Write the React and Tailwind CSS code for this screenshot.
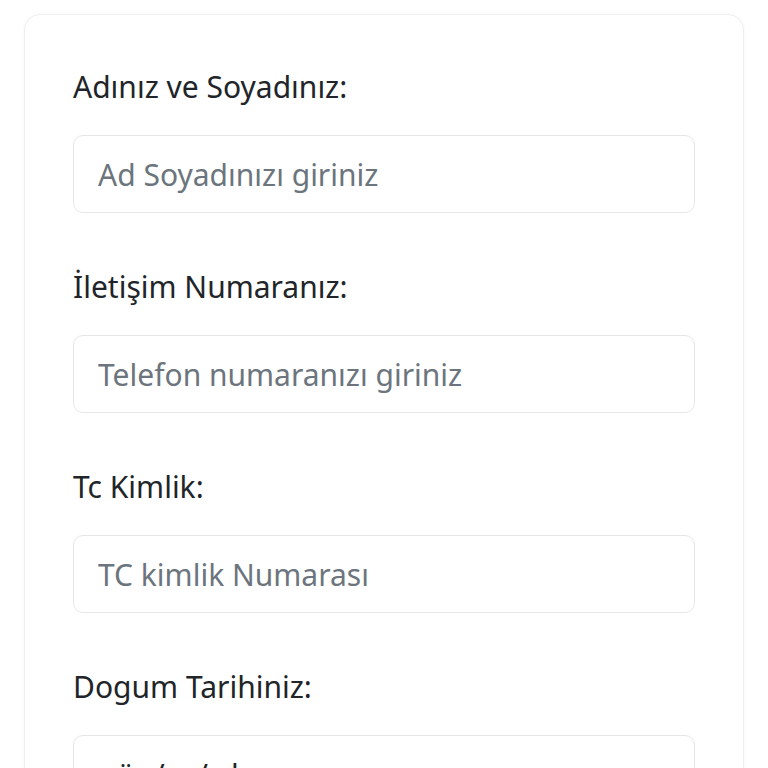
import React from "react";

const fields = [
  { label: "Adınız ve Soyadınız:", placeholder: "Ad Soyadınızı giriniz" },
  { label: "İletişim Numaranız:", placeholder: "Telefon numaranızı giriniz" },
  { label: "Tc Kimlik:", placeholder: "TC kimlik Numarası" },
];

export default function App() {
  return (
    <div className="min-h-[768px] bg-white" style={{ fontFamily: "'Noto Sans', Lato, sans-serif" }}>
      <div className="mx-6 pt-[14px]">
        <div className="rounded-2xl border border-[#efefef] bg-white px-12 pt-12 pb-12 shadow-[0_0_4px_rgba(0,0,0,0.03)]">
          {fields.map((f) => (
            <div key={f.label} className="mb-[50px]">
              <label className="mb-6 block text-[30px] leading-[48px] text-[#212529]">{f.label}</label>
              <input
                type="text"
                placeholder={f.placeholder}
                className="block h-[78px] w-full rounded-[10px] border border-[#e6e6e6] bg-white px-6 text-[30px] text-[#212529] outline-none placeholder:text-[#6c757d]"
              />
            </div>
          ))}
          <div className="mb-[50px]">
            <label className="mb-6 block text-[30px] leading-[48px] text-[#212529]">Dogum Tarihiniz:</label>
            <div className="flex h-[78px] w-full items-center rounded-[10px] border border-[#e6e6e6] bg-white px-6 text-[30px] text-[#212529]">
              gün/ay/yıl
            </div>
          </div>
        </div>
      </div>
    </div>
  );
}
